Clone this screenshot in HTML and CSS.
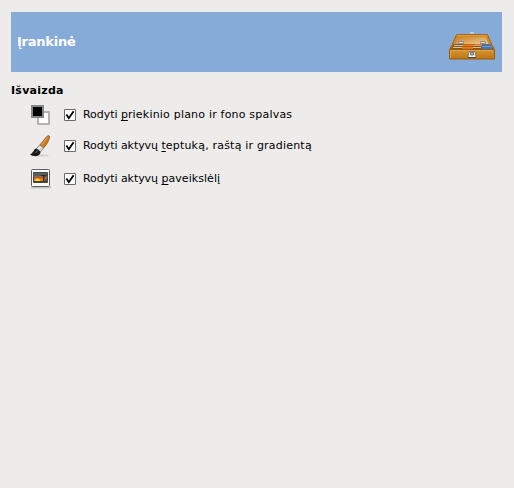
FILE: index.html
```html
<!DOCTYPE html>
<html lang="lt">
<head>
<meta charset="utf-8">
<title>Įrankinė</title>
<link rel="stylesheet" href="styles.css">
</head>
<body>
<main class="page">
  <header class="banner">
    <h1 class="title">Įrankinė</h1>
    <svg class="toolbox" width="48" height="48" viewBox="0 0 48 48">
      <defs>
        <linearGradient id="wood" x1="0" y1="0" x2="0" y2="1"><stop offset="0" stop-color="#d99535"/><stop offset="1" stop-color="#bd7510"/></linearGradient>
        <linearGradient id="lid" x1="0" y1="0" x2="1" y2="1"><stop offset="0" stop-color="#c98220"/><stop offset="1" stop-color="#efcd9b"/></linearGradient>
      </defs>
      <path d="M22.500 16V14.700h3V16" fill="#aaa" stroke="#ddd"/>
      <path d="M8.500 16.500h31l4 9.500 3 5.500h-45l3-5.500z" fill="#cf882a" stroke="#a8640b"/>
      <path d="M10.500 19h27l3 7h-33z" fill="url(#lid)"/>
      <path d="M9 17.500h30" stroke="#dda14e"/>
      <path d="M5.500 26h37l3 5h-43z" fill="#8b5517"/>
      <path d="M6 27.500h9M5 29.500h9M26 27.500h9M25 29.500h8" stroke="#d0c0a8"/>
      <path d="M15 26.500h11v1.800H15zM14 29h11v1.800H14z" fill="#f57918"/>
      <path d="M27 26h7v1.500h-7z" fill="#e57a20"/>
      <path d="M34 26.500h9l1.500 4.500H33z" fill="#3f76c4"/>
      <path d="M34.500 28.500h9" stroke="#7599cd"/>
      <path d="M10.500 23.500h5v2h-5zM32.500 23.500h5v2h-5z" fill="#dcdcd8" stroke="#8a8b85"/>
      <path d="M1.500 31.500h45v9.500h-45z" fill="url(#wood)" stroke="#9b5b08"/>
      <path d="M2.500 40V32.500H45.500" fill="none" stroke="#e5a84c" stroke-width=".8"/>
      <path d="M21 33.500h6l1 6h-8z" fill="#f5f5f2" stroke="#686a66" stroke-width=".8"/>
      <path d="M22.500 34.500h3v2.500h-3z" fill="#bbb" stroke="#555" stroke-width=".8"/>
      <path d="M20 39.500h8" stroke="#444"/>
    </svg>
  </header>
  <section>
    <h2 class="heading">Išvaizda</h2>
    <ul class="options">
      <li class="option">
        <svg class="icon" width="22" height="22" viewBox="0 0 22 22">
          <path d="M8 8h11v12H8z" fill="#fff" stroke="#b2b2b2" stroke-width="2"/>
          <path d="M2 2h11v11H2z" fill="#000" stroke="#858585" stroke-width="2"/>
        </svg>
        <svg class="check" width="12" height="12" viewBox="0 0 12 12"><path class="box" d="M.5.5h11v11H.5z"/><path class="tick" d="M2.400 5.500 4.800 9.200 9.600 2.200"/></svg>
        <span><span class="lead">Rodyti </span><span class="key">p</span><span class="wide">riekinio plano ir fono spalvas</span></span>
      </li>
      <li class="option">
        <svg class="icon" width="22" height="22" viewBox="0 0 22 22">
          <ellipse cx="11" cy="20.500" rx="8" ry="1.200" fill="#d2d2cf"/>
          <path d="M9.500 10.500 16.500 1.800Q19-.8 19.500 1.500C19.500 5.500 16 10.500 13 13.500z" fill="#cf7b22" stroke="#8f5518" stroke-width=".8"/>
          <path d="M11.500 10 17.500 2.500" stroke="#eba654"/>
          <path d="M6.500 13.500 9.500 10 13.500 13 10.500 17z" fill="#d5d6d3" stroke="#777" stroke-width=".7"/>
          <path d="M8.500 14 11 11.500" stroke="#fff"/>
          <path d="M6.500 13.500C3.500 14 4 17.500 0 19.500 4 22.500 10.500 21.500 10.500 16.800z" fill="#1c1c1c"/>
          <path d="M5.500 17.500 7.500 16" stroke="#777"/>
        </svg>
        <svg class="check" width="12" height="12" viewBox="0 0 12 12"><path class="box" d="M.5.5h11v11H.5z"/><path class="tick" d="M2.400 5.500 4.800 9.200 9.600 2.200"/></svg>
        <span><span class="lead">Rodyti aktyvų </span><span class="key">t</span><span class="wide">eptuką, raštą ir gradientą</span></span>
      </li>
      <li class="option">
        <svg class="icon" width="22" height="22" viewBox="0 0 22 22">
          <path d="M1 19.500h20" stroke="#c2c2bf" stroke-width="2"/>
          <rect x="1.500" y="1.500" width="18" height="17" rx="1" fill="#fafafa" stroke="#5e605c"/>
          <path d="M3.500 4.500h14v10h-14z" fill="#6b5846" stroke="#454b4b"/>
          <path d="M4 5h13v3H4z" fill="#59605e"/>
          <path d="M4 8h13v3H4z" fill="#a7643b"/>
          <path d="M4 10.500h9v2.500H4z" fill="#f47b18"/>
          <path d="M5 13a2.500 2.500 0 0 1 5 0z" fill="#ffe02b"/>
          <path d="M13.500 14V8M10.500 7.500h6M13.500 10l2.500-2.500" fill="none" stroke="#302b29"/>
          <path d="M4 13.500h13" stroke="#493b2e"/>
        </svg>
        <svg class="check" width="12" height="12" viewBox="0 0 12 12"><path class="box" d="M.5.5h11v11H.5z"/><path class="tick" d="M2.400 5.500 4.800 9.200 9.600 2.200"/></svg>
        <span><span class="lead">Rodyti aktyvų </span><span class="key">p</span><span class="normal">aveikslėlį</span></span>
      </li>
    </ul>
  </section>
</main>
</body>
</html>
```
FILE: styles.css
```css
body {
  margin: 0;
  background: #edeceb;
  color: #000;
  font: 11px/14px "DejaVu Sans", sans-serif;
}
.page { padding: 12px 12px 0 11px; }
.banner {
  display: flex;
  align-items: center;
  justify-content: space-between;
  box-sizing: border-box;
  height: 60px;
  padding: 0 6px;
  background: #86abd9;
  color: #fff;
}
.title { margin: 0; font-size: 13px; line-height: 16px; letter-spacing: -.25px; }
.toolbox { display: block; }
.heading { margin: 12px 0 0; font-size: 11px; line-height: 14px; letter-spacing: .25px; }
.options {
  display: grid;
  grid-template-rows: 31px 32px 33px;
  margin: 1px 0 0;
  padding: 0 0 0 19px;
  list-style: none;
}
.option { display: flex; align-items: center; }
.icon { margin-right: 12px; }
.check { margin-right: 7px; }
.box { fill: #fff; stroke: #6b6b69; }
.tick { fill: none; stroke: #000; stroke-width: 1.8; }
.lead { letter-spacing: -.05px; }
.wide { letter-spacing: .2px; }
.normal { letter-spacing: .06px; }
.key { text-decoration: underline; text-underline-offset: 2px; text-decoration-thickness: 1px; text-decoration-skip-ink: none; }
```
